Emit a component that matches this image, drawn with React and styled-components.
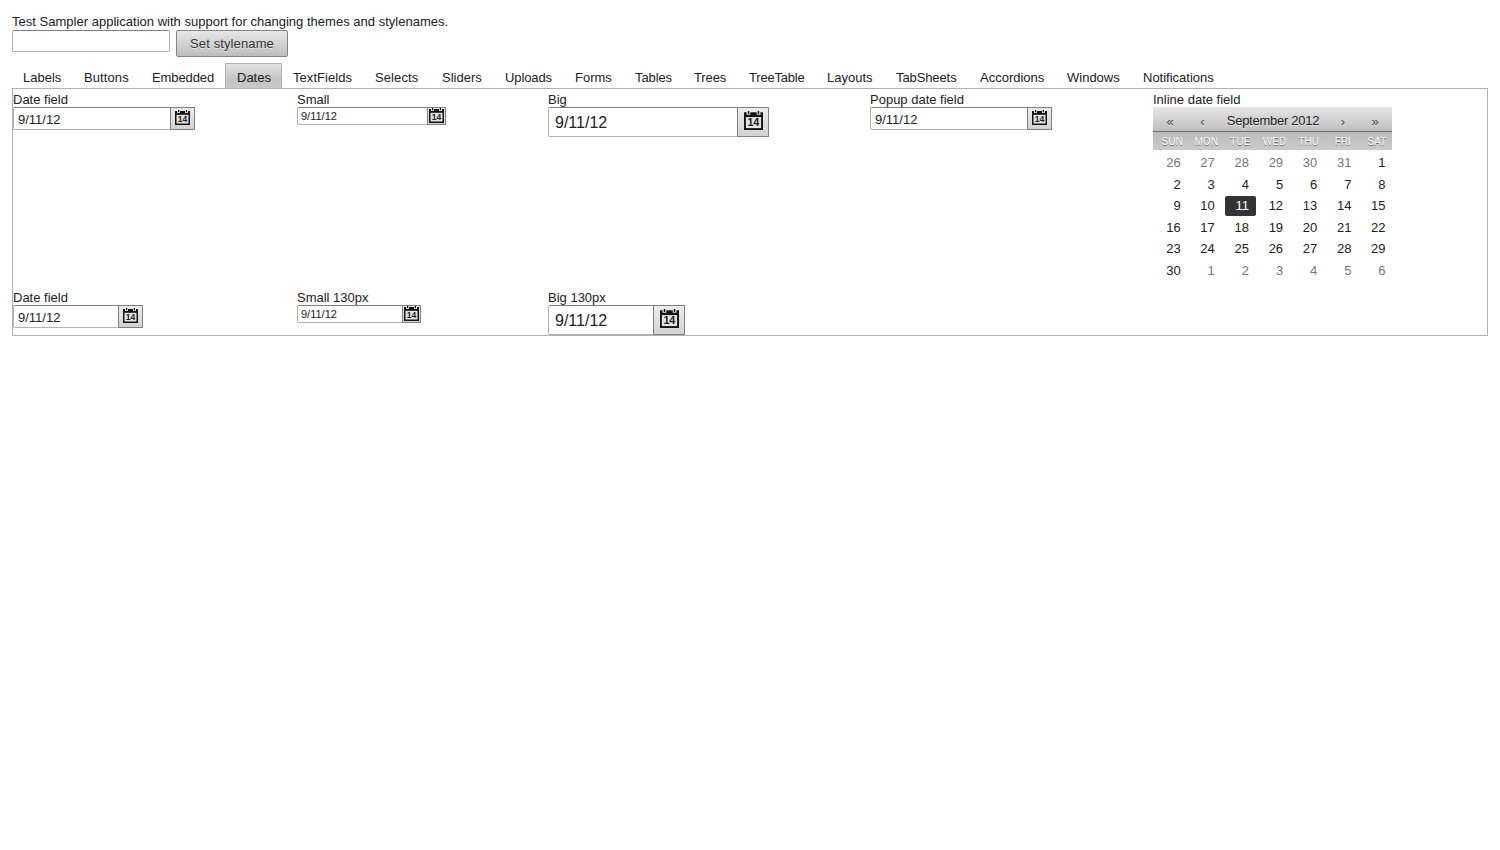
import React from "react";
import styled, { createGlobalStyle } from "styled-components";

const GlobalStyle = createGlobalStyle`
  *, *::before, *::after { box-sizing: border-box; }
  body { margin: 0; background: #fff; color: #222; font: 13px/18px "Liberation Sans", Arial, sans-serif; }
`;

const Page = styled.main`
  padding: 12px;
`;

const Intro = styled.div`
  height: 18px;
  line-height: 20px;
  letter-spacing: 0.017px;
  white-space: nowrap;
`;

const StyleForm = styled.div`
  display: flex;
  gap: 6px;
  height: 33px;
  align-items: flex-start;
`;

const TextInput = styled.input`
  width: ${(p) => p.$width}px;
  height: ${(p) => p.$height}px;
  margin: 0;
  padding: ${(p) => p.$padding || "0 4px"};
  border: 1px solid #b2b2b2;
  border-top-color: #808080;
  border-radius: 2px;
  background: #fff;
  color: #222;
  font: ${(p) => p.$font || 13}px "Liberation Sans", Arial, sans-serif;
  outline: none;
`;

const Button = styled.button`
  width: 112px;
  height: 27px;
  margin: 0;
  padding: 0;
  border: 1px solid #858585;
  border-radius: 2px;
  background: linear-gradient(#e8e8e8, #bdbdbd);
  color: #333;
  font: 13px "Liberation Sans", Arial, sans-serif;
  letter-spacing: 0.12px;
  text-shadow: 0 1px 0 rgba(255, 255, 255, 0.6);
`;

const TabBar = styled.nav`
  display: flex;
  height: 25px;
`;

const Tab = styled.div`
  width: ${(p) => p.$width}px;
  flex: none;
  padding: 6px 0 0 11px;
  letter-spacing: ${(p) => p.$spacing || 0}px;
  white-space: nowrap;
  border: solid #b2b2b2;
  border-width: ${(p) => (p.$active ? "1px 1px 0" : 0)};
  ${(p) => p.$active && "padding-top: 5px; background: linear-gradient(#e3e3e3, #c4c4c4 60%, #c8c8c8);"}
`;

const Sheet = styled.section`
  display: grid;
  grid-template-columns: 284px 251px 322px 283px 1fr;
  grid-template-rows: 198px 47px;
  height: 248px;
  padding-top: 1px;
  border: 1px solid #b2b2b2;
`;

const Field = styled.div`
  display: flex;
  flex-direction: column;
  align-items: flex-start;
`;

const Caption = styled.div`
  height: 17px;
  line-height: 20px;
  white-space: nowrap;
`;

const DateControl = styled.div`
  display: flex;
`;

const PickerButton = styled.button`
  display: flex;
  justify-content: center;
  align-items: flex-start;
  width: ${(p) => p.$width}px;
  height: ${(p) => p.$height}px;
  margin: 0 0 0 -1px;
  padding: ${(p) => p.$top}px 0 0;
  border: 1px solid #808080;
  background: linear-gradient(#ececec, #d2d2d2);

  svg { display: block; flex: none; }
`;

const Calendar = styled.div`
  width: 239px;
`;

const MonthBar = styled.div`
  display: grid;
  grid-template-columns: 34px 31px 110px 30px 34px;
  height: 25px;
  border-bottom: 1px solid #6e6e6e;
  background: linear-gradient(#e6e6e6, #bfbfbf);
  line-height: 27px;
  text-align: center;
  text-shadow: 0 1px 0 rgba(255, 255, 255, 0.5);
`;

const Arrow = styled.span`
  color: #444;
  line-height: 29px;
`;

const Month = styled.span`
  letter-spacing: -0.26px;
`;

const WeekBar = styled.div`
  display: grid;
  grid-template-columns: repeat(7, 34.15px);
  height: 18px;
  padding-left: 2px;
  background: linear-gradient(#bcbcbc, #cacaca);
  color: #fff;
  font-size: 10px;
  line-height: 19px;
  text-align: center;
  text-shadow: 0 1px 0 rgba(0, 0, 0, 0.45);
`;

const Days = styled.div`
  display: grid;
  grid-template-columns: repeat(7, 34.15px);
  grid-auto-rows: 21.6px;
  padding-top: 2px;
`;

const Day = styled.div`
  width: 31px;
  height: 20px;
  margin: 1px 0 0 3.7px;
  padding-right: 7px;
  border-radius: 2px;
  line-height: 20px;
  text-align: right;
  color: ${(p) => (p.$selected ? "#fff" : p.$muted ? "#777" : "#222")};
  background: ${(p) => (p.$selected ? "#333" : "transparent")};
`;

const tabs = [
  ["Labels", 61], ["Buttons", 68, 0.1], ["Embedded", 84, -0.1], ["Dates", 57], ["TextFields", 82, 0.05],
  ["Selects", 67, 0.1], ["Sliders", 63], ["Uploads", 70, -0.1], ["Forms", 60], ["Tables", 59, -0.1],
  ["Trees", 55, -0.1], ["TreeTable", 78, -0.2], ["Layouts", 69], ["TabSheets", 84, -0.1],
  ["Accordions", 87], ["Windows", 76], ["Notifications", 90],
];

const sizes = {
  normal: { font: 13, height: 23, button: 25, buttonHeight: 23, icon: 15, top: 2, padding: "1px 4px 0" },
  small: { font: 11, height: 18, button: 19, buttonHeight: 18, icon: 15, top: 0, padding: "0 3px" },
  big: { font: 16, height: 30, button: 32, buttonHeight: 30, icon: 19, top: 3, padding: "1px 6px 0" },
};

const CalendarIcon = ({ size }) => (
  <svg width={size} height={size} viewBox="0 0 15 15">
    <path fill="#151515" d="M0 1h2v2h3V1h5v2h3V1h2v14H0z" />
    <path fill="#151515" d="M3 0h1.2v2.3H3zM10.8 0H12v2.3h-1.2z" />
    <path fill="#e4e4e4" d="M1.5 4.8h12v8.7h-12z" />
    <text x="7.4" y="12.2" textAnchor="middle" fontFamily="Liberation Sans, Arial, sans-serif" fontWeight="700" fontSize="8.5" fill="#222">14</text>
  </svg>
);

const DateField = ({ caption, size = "normal", width }) => {
  const s = sizes[size];
  return (
    <Field>
      <Caption>{caption}</Caption>
      <DateControl>
        <TextInput readOnly value="9/11/12" $width={width} $height={s.height} $font={s.font} $padding={s.padding} />
        <PickerButton aria-label="Open calendar" $width={s.button} $height={s.buttonHeight} $top={s.top}>
          <CalendarIcon size={s.icon} />
        </PickerButton>
      </DateControl>
    </Field>
  );
};

const days = Array.from({ length: 42 }, (_, i) => {
  const n = i - 5;
  return { value: n < 1 ? n + 31 : n > 30 ? n - 30 : n, muted: n < 1 || n > 30, selected: n === 11 };
});

export default function App() {
  return (
    <Page>
      <GlobalStyle />
      <Intro>Test Sampler application with support for changing themes and stylenames.</Intro>
      <StyleForm>
        <TextInput aria-label="Stylename" $width={158} $height={22} />
        <Button>Set stylename</Button>
      </StyleForm>
      <TabBar>
        {tabs.map(([label, width, spacing]) => (
          <Tab key={label} $width={width} $spacing={spacing} $active={label === "Dates"}>{label}</Tab>
        ))}
      </TabBar>
      <Sheet>
        <DateField caption="Date field" width={158} />
        <DateField caption="Small" size="small" width={131} />
        <DateField caption="Big" size="big" width={190} />
        <DateField caption="Popup date field" width={158} />
        <Field>
          <Caption>Inline date field</Caption>
          <Calendar>
            <MonthBar>
              <Arrow>«</Arrow><Arrow>‹</Arrow><Month>September 2012</Month><Arrow>›</Arrow><Arrow>»</Arrow>
            </MonthBar>
            <WeekBar>
              {["SUN", "MON", "TUE", "WED", "THU", "FRI", "SAT"].map((d) => <span key={d}>{d}</span>)}
            </WeekBar>
            <Days>
              {days.map((d, i) => <Day key={i} $muted={d.muted} $selected={d.selected}>{d.value}</Day>)}
            </Days>
          </Calendar>
        </Field>
        <DateField caption="Date field" width={106} />
        <DateField caption="Small 130px" size="small" width={106} />
        <DateField caption="Big 130px" size="big" width={106} />
      </Sheet>
    </Page>
  );
}
